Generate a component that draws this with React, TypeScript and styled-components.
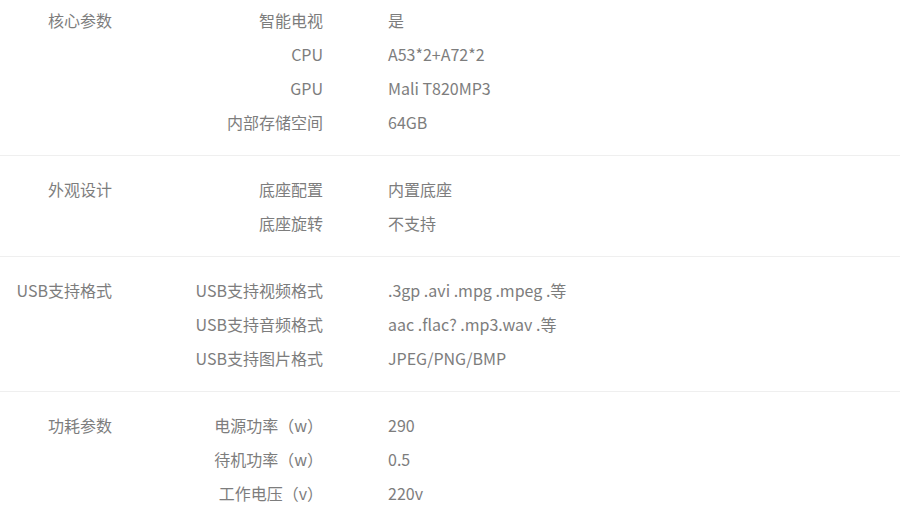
import React from 'react';
import styled, { createGlobalStyle } from 'styled-components';

const GlobalStyle = createGlobalStyle`
  html, body {
    margin: 0;
    padding: 0;
    background: #fff;
  }
  body {
    font-family: "Noto Sans CJK SC", "Noto Sans", sans-serif;
    overflow: hidden;
  }
`;

const SpecList = styled.div`
  width: 900px;
  color: #7d7d7d;
  font-size: 16px;
`;

const Group = styled.section`
  display: grid;
  grid-template-columns: 112px 211px 1fr;
  padding: 16px 0;
  border-bottom: 1px solid #efefef;

  &:first-child {
    padding-top: 3px;
  }

  &:last-child {
    border-bottom: none;
  }
`;

const GroupTitle = styled.div`
  grid-column: 1;
  grid-row: 1;
  text-align: right;
  line-height: 34px;
  white-space: nowrap;
`;

const Rows = styled.div`
  grid-column: 2 / 4;
  display: flex;
  flex-direction: column;
`;

const Row = styled.div`
  display: grid;
  grid-template-columns: 211px 1fr;
  column-gap: 65px;
  height: 34px;
  line-height: 34px;
`;

const Key = styled.div`
  text-align: right;
  white-space: nowrap;
`;

const Value = styled.div`
  white-space: nowrap;
`;

interface SpecGroup {
  title: string;
  items: [string, string][];
}

const groups: SpecGroup[] = [
  {
    title: '核心参数',
    items: [
      ['智能电视', '是'],
      ['CPU', 'A53*2+A72*2'],
      ['GPU', 'Mali T820MP3'],
      ['内部存储空间', '64GB'],
    ],
  },
  {
    title: '外观设计',
    items: [
      ['底座配置', '内置底座'],
      ['底座旋转', '不支持'],
    ],
  },
  {
    title: 'USB支持格式',
    items: [
      ['USB支持视频格式', '.3gp .avi .mpg .mpeg .等'],
      ['USB支持音频格式', 'aac .flac? .mp3.wav .等'],
      ['USB支持图片格式', 'JPEG/PNG/BMP'],
    ],
  },
  {
    title: '功耗参数',
    items: [
      ['电源功率（w）', '290'],
      ['待机功率（w）', '0.5'],
      ['工作电压（v）', '220v'],
    ],
  },
];

export default function App(): React.ReactElement {
  return (
    <>
      <GlobalStyle />
      <SpecList>
        {groups.map(g => (
          <Group key={g.title}>
            <GroupTitle>{g.title}</GroupTitle>
            <Rows>
              {g.items.map(([k, v]) => (
                <Row key={k}>
                  <Key>{k}</Key>
                  <Value>{v}</Value>
                </Row>
              ))}
            </Rows>
          </Group>
        ))}
      </SpecList>
    </>
  );
}
